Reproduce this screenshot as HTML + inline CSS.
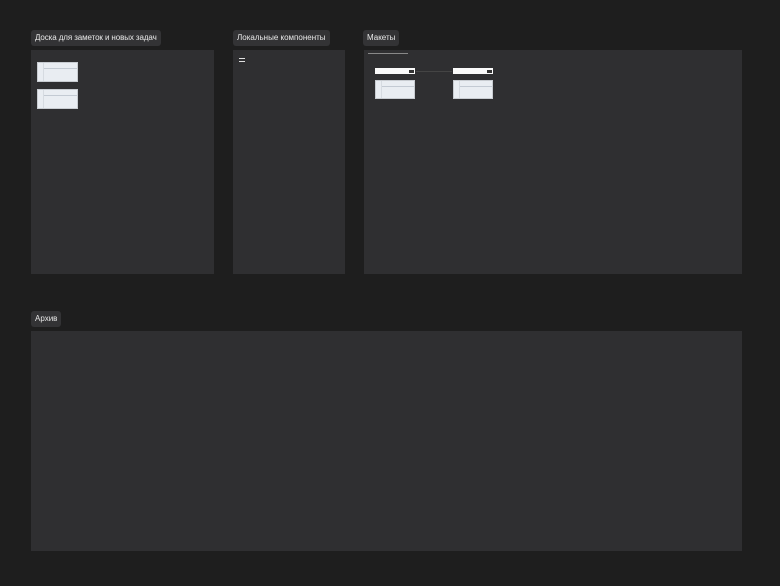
<!DOCTYPE html><html><head><style>
body{margin:0;width:780px;height:586px;background:#1e1e1e;position:relative;overflow:hidden;font-family:"Liberation Sans",sans-serif}
.f{position:absolute;background:#2f2f31}
.l{position:absolute;background:#333335;color:#e8e8e8;font-size:8px;line-height:16px;height:16px;padding:0 4px;border-radius:3px;white-space:nowrap}
.t{position:absolute;background:#e9edf2;border:1px solid #c8ccd1;box-sizing:border-box}
.t i{position:absolute;left:6px;right:0;top:5px;height:1px;background:#c3cad3}
.t s{position:absolute;left:5px;top:0;bottom:0;width:1px;background:#d6dbe1}
.h{position:absolute;background:#fafafa;box-sizing:border-box}
.h b{position:absolute;right:1px;top:2px;width:5px;height:3px;background:#333}
</style></head><body>
<div class="l" style="left:31px;top:30px;letter-spacing:-0.1px">Доска для заметок и новых задач</div>
<div class="l" style="left:233px;top:30px">Локальные компоненты</div>
<div class="l" style="left:363px;top:30px">Макеты</div>
<div class="l" style="left:31px;top:311px">Архив</div>
<div class="f" style="left:31px;top:50px;width:183px;height:224px"></div>
<div class="f" style="left:233px;top:50px;width:112px;height:224px"></div>
<div class="f" style="left:364px;top:50px;width:378px;height:224px"></div>
<div class="f" style="left:31px;top:331px;width:711px;height:220px"></div>
<div class="t" style="left:37px;top:62px;width:41px;height:20px"><s></s><i></i></div>
<div class="t" style="left:37px;top:89px;width:41px;height:20px"><s></s><i></i></div>
<div style="position:absolute;left:239px;top:58px;width:6px;height:1px;background:#e0e0e0;box-shadow:0 3px 0 #e0e0e0"></div>
<div style="position:absolute;left:368px;top:53px;width:40px;height:1px;background:#888"></div>
<div class="h" style="left:375px;top:68px;width:40px;height:6px"><b></b></div>
<div class="t" style="left:375px;top:80px;width:40px;height:19px"><s></s><i></i></div>
<div style="position:absolute;left:416px;top:71px;width:36px;height:1px;background:#444"></div>
<div class="h" style="left:453px;top:68px;width:40px;height:6px"><b></b></div>
<div class="t" style="left:453px;top:80px;width:40px;height:19px"><s></s><i></i></div>
</body></html>
